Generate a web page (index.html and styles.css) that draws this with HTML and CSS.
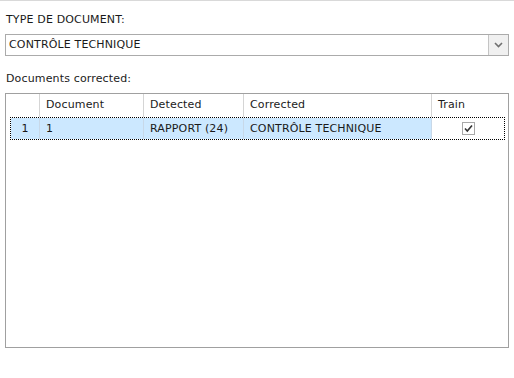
FILE: index.html
```html
<!DOCTYPE html>
<html>
<head>
<meta charset="utf-8">
<link rel="stylesheet" href="styles.css">
</head>
<body>
<div class="page">
  <div class="label first">TYPE DE DOCUMENT:</div>
  <div class="combo">
    <div class="combo-text">CONTRÔLE TECHNIQUE</div>
    <div class="combo-btn">
      <svg width="9" height="6" viewBox="0 0 9 6"><path d="M1 1 L4.5 4.5 L8 1" fill="none" stroke="#707070" stroke-width="1.6"/></svg>
    </div>
  </div>
  <div class="label second">Documents corrected:</div>
  <div class="grid">
    <div class="head">
      <div class="hc c0"></div>
      <div class="hc c1">Document</div>
      <div class="hc c2">Detected</div>
      <div class="hc c3">Corrected</div>
      <div class="hc c4">Train</div>
    </div>
    <div class="row">
      <div class="rc r0">1</div>
      <div class="rc r1">1</div>
      <div class="rc r2">RAPPORT (24)</div>
      <div class="rc r3">CONTRÔLE TECHNIQUE</div>
      <div class="rc r4"><span class="check"><svg width="11" height="11" viewBox="0 0 11 11"><path d="M2 5.5 L4.3 8 L9 2.5" fill="none" stroke="#333" stroke-width="1.6"/></svg></span></div>
    </div>
  </div>
</div>
</body>
</html>
```
FILE: styles.css
```css
html, body {
  margin: 0;
  padding: 0;
  background: #ffffff;
}
body {
  font-family: "DejaVu Sans", Verdana, sans-serif;
  font-size: 11px;
  color: #1a1a1a;
  letter-spacing: 0.15px;
}
.page {
  border-top: 1px solid #d9d9d9;
  padding: 0 5px 0 5px;
  width: 504px;
  display: flex;
  flex-direction: column;
}
.label {
  height: 13px;
  line-height: 13px;
  padding-left: 1px;
}
.first { margin-top: 12px; }
.combo {
  margin-top: 8px;
  height: 20px;
  border: 1px solid #ababab;
  display: flex;
  align-items: stretch;
}
.combo-text {
  flex: 1;
  line-height: 20px;
  padding-left: 3px;
}
.combo-btn {
  width: 19px;
  border-left: 1px solid #c4c4c4;
  background: #f0f0f0;
  display: flex;
  align-items: center;
  justify-content: center;
}
.second { margin-top: 16px; }
.grid {
  margin-top: 8px;
  height: 253px;
  border: 1px solid #a0a0a0;
}
.head {
  display: grid;
  grid-template-columns: 34px 104px 100px 188px 1fr;
  height: 23px;
}
.hc {
  border-right: 1px solid #d5d5d5;
  line-height: 22px;
  padding-left: 6px;
}
.hc.c4 { border-right: none; }
.row {
  margin: 0 3px 0 4px;
  height: 21px;
  border: 1px dotted #000;
  display: grid;
  grid-template-columns: 29px 104px 100px 188px 1fr;
}
.rc {
  line-height: 21px;
  padding-left: 6px;
  background: #cce8ff;
  border-right: 1px solid #c8d8e8;
}
.rc.r0 { padding-left: 0; text-align: center; }
.rc.r4 {
  background: #ffffff;
  border-right: none;
  padding-left: 0;
  display: flex;
  align-items: center;
  justify-content: center;
}
.check {
  width: 11px;
  height: 11px;
  border: 1px solid #a8a8a8;
  display: flex;
  background: #ffffff;
}
```
